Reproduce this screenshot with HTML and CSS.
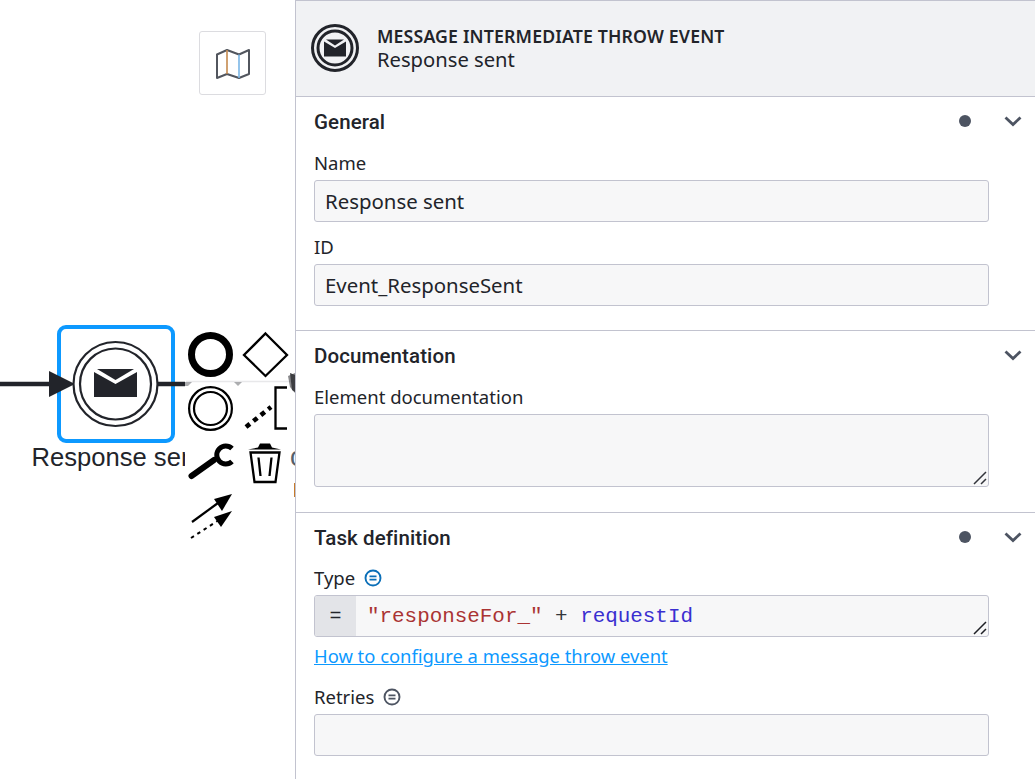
FILE: index.html
```html
<!DOCTYPE html>
<html lang="en">
<head>
<meta charset="utf-8">
<title>Response sent</title>
<link rel="stylesheet" href="styles.css">
</head>
<body>
<div class="app">
  <div class="canvas">
    <svg class="diagram" width="295" height="779" viewBox="0 0 295 779" xmlns="http://www.w3.org/2000/svg">
      <rect x="59" y="327" width="114" height="114" rx="7" fill="#fff" stroke="#0d99ff" stroke-width="4"/>
      <path d="M0 384H52" stroke="#22242a" stroke-width="4.500" fill="none"/>
      <path d="M49 371L75 384L49 397Z" fill="#22242a"/>
      <path d="M158 384H186" stroke="#22242a" stroke-width="4.500" fill="none"/>
      <circle cx="115.500" cy="384" r="42" fill="#fff" stroke="#22242a" stroke-width="2.200"/>
      <circle cx="115.500" cy="384" r="35.500" fill="#fff" stroke="#22242a" stroke-width="2.200"/>
      <path d="M94 372L115.500 384L137 372V397H94Z" fill="#22242a"/>
      <path d="M97 369H134L115.500 380Z" fill="#22242a"/>
      <text class="label-text" x="31.500" y="466">Response sent</text>
      <rect x="185" y="325" width="110" height="215" fill="#fff"/>
      <path d="M186 381.500H295" stroke="#e8e8ea" stroke-width="1.500"/>
      <path d="M185 382H192L188 386H185ZM234 382H242L238 386Z" fill="#8a8b8e" opacity=".7"/>
      <path d="M288 376L295 373V393L290 387Z" fill="#55565a" opacity=".7"/>
      <path d="M290 373L295 375V392L292 390Z" fill="#3d3e42"/>
      <circle cx="210.500" cy="354.500" r="19" fill="none" stroke="#000" stroke-width="7"/>
      <path d="M265.500 333.500L287 355L265.500 376L244 355Z" fill="none" stroke="#000" stroke-width="2.300"/>
      <circle cx="210.500" cy="408.500" r="21.400" fill="none" stroke="#000" stroke-width="2.200"/>
      <circle cx="210.500" cy="408.500" r="16.500" fill="none" stroke="#000" stroke-width="2.200"/>
      <path d="M246 427L271 407" stroke="#000" stroke-width="4.600" stroke-dasharray="5 4.500" fill="none"/>
      <path d="M287 387.500H275.500V428.500H287" stroke="#000" stroke-width="2.300" fill="none"/>
      <path d="M191.500 476L214 460" stroke="#000" stroke-width="6" stroke-linecap="round"/>
      <path d="M232 448.500A9 9 0 1 0 232 461.500" fill="none" stroke="#000" stroke-width="5"/>
      <path d="M248 449.500L258 447.500L260 443.500H270L272 447.500L281 449.500Z" fill="#000"/>
      <path d="M250.500 452.500H279.500L275.500 482H254.500Z" fill="none" stroke="#000" stroke-width="2.300"/>
      <path d="M258.500 457.500L260.500 476M271.500 457.500L269.500 476" stroke="#000" stroke-width="2.300" fill="none"/>
      <path d="M192 522L218 503" stroke="#000" stroke-width="2.200"/>
      <path d="M232 494L214 499L222 511Z" fill="#000"/>
      <path d="M191 538L219 520" stroke="#000" stroke-width="2" stroke-dasharray="3.500 4"/>
      <path d="M232 511L214 517L221 527Z" fill="#000"/>
      <text class="cut-text" x="290" y="466">c</text>
      <rect x="294" y="483" width="1" height="14" fill="#c77a2a"/>
    </svg>
    <button class="map-toggle" type="button" aria-label="Toggle minimap">
      <svg class="map-icon" width="36" height="32" viewBox="0 0 36 32" xmlns="http://www.w3.org/2000/svg">
        <path d="M2 6.500L12 2L24 6.500L34 2V26L24 30L12 26L2 30Z" fill="none" stroke="#52565e" stroke-width="2" stroke-linejoin="round"/>
        <path d="M12 2V26" stroke="#c58a4e" stroke-width="1.600"/>
        <path d="M24 6.500V30" stroke="#7ab6e6" stroke-width="1.600"/>
      </svg>
    </button>
  </div>

  <aside class="panel">
    <header class="panel-header">
      <svg class="header-icon" width="50" height="50" viewBox="0 0 50 50" xmlns="http://www.w3.org/2000/svg">
        <circle cx="25" cy="25" r="22.500" fill="none" stroke="#22242a" stroke-width="3"/>
        <circle cx="25" cy="25" r="17" fill="none" stroke="#22242a" stroke-width="3"/>
        <path d="M14 18.500L25 25L36 18.500V33.500H14Z" fill="#22242a"/>
        <path d="M16 16.500H34L25 22.500Z" fill="#22242a"/>
      </svg>
      <div class="header-text">
        <div class="header-type">MESSAGE INTERMEDIATE THROW EVENT</div>
        <div class="header-name">Response sent</div>
      </div>
    </header>

    <section class="group group-general">
      <div class="group-head">
        <span class="group-title">General</span>
        <span class="dot"></span>
        <svg class="chevron" width="18" height="11" viewBox="0 0 18 11" xmlns="http://www.w3.org/2000/svg"><path d="M1.500 1.500L9 8.500L16.500 1.500" fill="none" stroke="#4d5462" stroke-width="2.800"/></svg>
      </div>
      <label class="field-label">Name</label>
      <div class="input">Response sent</div>
      <label class="field-label field-next">ID</label>
      <div class="input">Event_ResponseSent</div>
    </section>

    <section class="group group-doc">
      <div class="group-head">
        <span class="group-title">Documentation</span>
        <svg class="chevron" width="18" height="11" viewBox="0 0 18 11" xmlns="http://www.w3.org/2000/svg"><path d="M1.500 1.500L9 8.500L16.500 1.500" fill="none" stroke="#4d5462" stroke-width="2.800"/></svg>
      </div>
      <label class="field-label">Element documentation</label>
      <div class="input textarea">
        <svg class="grip" width="14" height="14" viewBox="0 0 14 14" xmlns="http://www.w3.org/2000/svg"><path d="M1 13L13 1M8 13L13 8" stroke="#33353b" stroke-width="1.500" fill="none"/></svg>
      </div>
    </section>

    <section class="group group-task">
      <div class="group-head">
        <span class="group-title">Task definition</span>
        <span class="dot"></span>
        <svg class="chevron" width="18" height="11" viewBox="0 0 18 11" xmlns="http://www.w3.org/2000/svg"><path d="M1.500 1.500L9 8.500L16.500 1.500" fill="none" stroke="#4d5462" stroke-width="2.800"/></svg>
      </div>
      <label class="field-label label-icon label-type">Type
        <svg width="18" height="18" viewBox="0 0 18 18" xmlns="http://www.w3.org/2000/svg"><circle cx="9" cy="9" r="7.500" fill="none" stroke="#0b6fb8" stroke-width="1.900"/><path d="M5.500 7.300H12.500M5.500 10.700H12.500" stroke="#0b6fb8" stroke-width="1.700"/></svg>
      </label>
      <div class="input feel">
        <span class="feel-eq">=</span>
        <code class="feel-code"><span class="tok-str">"responseFor_"</span> + <span class="tok-var">requestId</span></code>
        <svg class="grip" width="14" height="14" viewBox="0 0 14 14" xmlns="http://www.w3.org/2000/svg"><path d="M1 13L13 1M8 13L13 8" stroke="#1f2025" stroke-width="1.500" fill="none"/></svg>
      </div>
      <a class="doc-link" href="#">How to configure a message throw event</a>
      <label class="field-label label-icon field-retries">Retries
        <svg width="18" height="18" viewBox="0 0 18 18" xmlns="http://www.w3.org/2000/svg"><circle cx="9" cy="9" r="7.500" fill="none" stroke="#4d5462" stroke-width="1.900"/><path d="M5.500 7.300H12.500M5.500 10.700H12.500" stroke="#4d5462" stroke-width="1.700"/></svg>
      </label>
      <div class="input"></div>
    </section>
  </aside>
</div>
</body>
</html>
```
FILE: styles.css
```css
* { box-sizing: border-box; }
html, body { margin: 0; height: 100%; overflow: hidden; background: #fff; }
body { font-family: "Noto Sans", "Liberation Sans", sans-serif; color: #22242a; }
.app { display: flex; width: 1035px; height: 779px; }
.canvas { position: relative; flex: 0 0 295px; height: 779px; overflow: hidden; background: #fff; }
.diagram { position: absolute; left: 0; top: 0; }
.label-text { font-family: "Liberation Sans", Arial, sans-serif; font-size: 25.600px; fill: #22242a; }
.cut-text { font-family: "Liberation Sans", Arial, sans-serif; font-size: 27px; fill: #55606a; }
.map-toggle { position: absolute; left: 199px; top: 31px; width: 67px; height: 64px; padding: 0; display: flex; align-items: center; justify-content: center; background: #fff; border: 1px solid #dcdce0; border-radius: 3px; }
.map-icon { margin-top: 1px; }
.panel { flex: 1; min-width: 0; height: 779px; overflow: hidden; border-left: 1px solid #c2c3cf; border-top: 1px solid #c2c3cf; }
.panel-header { display: flex; align-items: center; gap: 17px; height: 96px; padding: 0 0 0 14px; background: #f1f2f4; border-bottom: 1px solid #c2c3cf; }
.header-icon { flex: none; margin-top: -2px; }
.header-text { display: flex; flex-direction: column; gap: 0; margin-top: -1px; }
.header-type { font-size: 17.700px; line-height: 23px; font-weight: 600; letter-spacing: .16px; }
.header-name { font-size: 20.200px; line-height: 23px; }
.group { padding: 0 46px 0 18px; border-bottom: 1px solid #c2c3cf; }
.group-general { height: 234px; }
.group-doc { height: 182px; }
.group-task { border-bottom: 0; }
.group-head { display: flex; align-items: center; height: 49px; position: relative; }
.group-title { flex: 1; font-family: Roboto, "Noto Sans", sans-serif; font-size: 20.500px; font-weight: 500; letter-spacing: .1px; }
.dot { position: absolute; right: 18px; top: 18px; width: 12px; height: 12px; border-radius: 50%; background: #4d5462; }
.chevron { position: absolute; right: -33px; top: 19px; }
.field-label { display: block; font-size: 18.500px; line-height: 24px; margin: 5px 0 5px; color: #22242a; }
.field-next { margin-top: 13px; }
.input { height: 42px; padding: 0 10px; display: flex; align-items: center; font-size: 20.400px; color: #22242a; background: #f7f7f8; border: 1px solid #c2c3cf; border-radius: 3px; }
.textarea { position: relative; height: 73px; }
.grip { position: absolute; right: 1px; bottom: 1px; }
.feel { position: relative; padding: 0; overflow: hidden; }
.feel-eq { flex: 0 0 41px; height: 100%; display: flex; align-items: center; justify-content: center; background: #e3e4e8; font-family: "Liberation Mono", monospace; font-size: 20px; }
.feel-code { padding-left: 11px; font-family: "Liberation Mono", monospace; font-size: 20.900px; white-space: pre; color: #33353b; }
.tok-str { color: #a33; }
.tok-var { color: #3a2fd0; }
.doc-link { display: block; margin-top: 7px; font-size: 18.400px; line-height: 24px; color: #0d99ff; text-decoration: underline; }
.label-icon { display: flex; align-items: center; gap: 9px; }
.label-type { margin-top: 4px; }
.field-retries { margin-top: 17px; }
```
